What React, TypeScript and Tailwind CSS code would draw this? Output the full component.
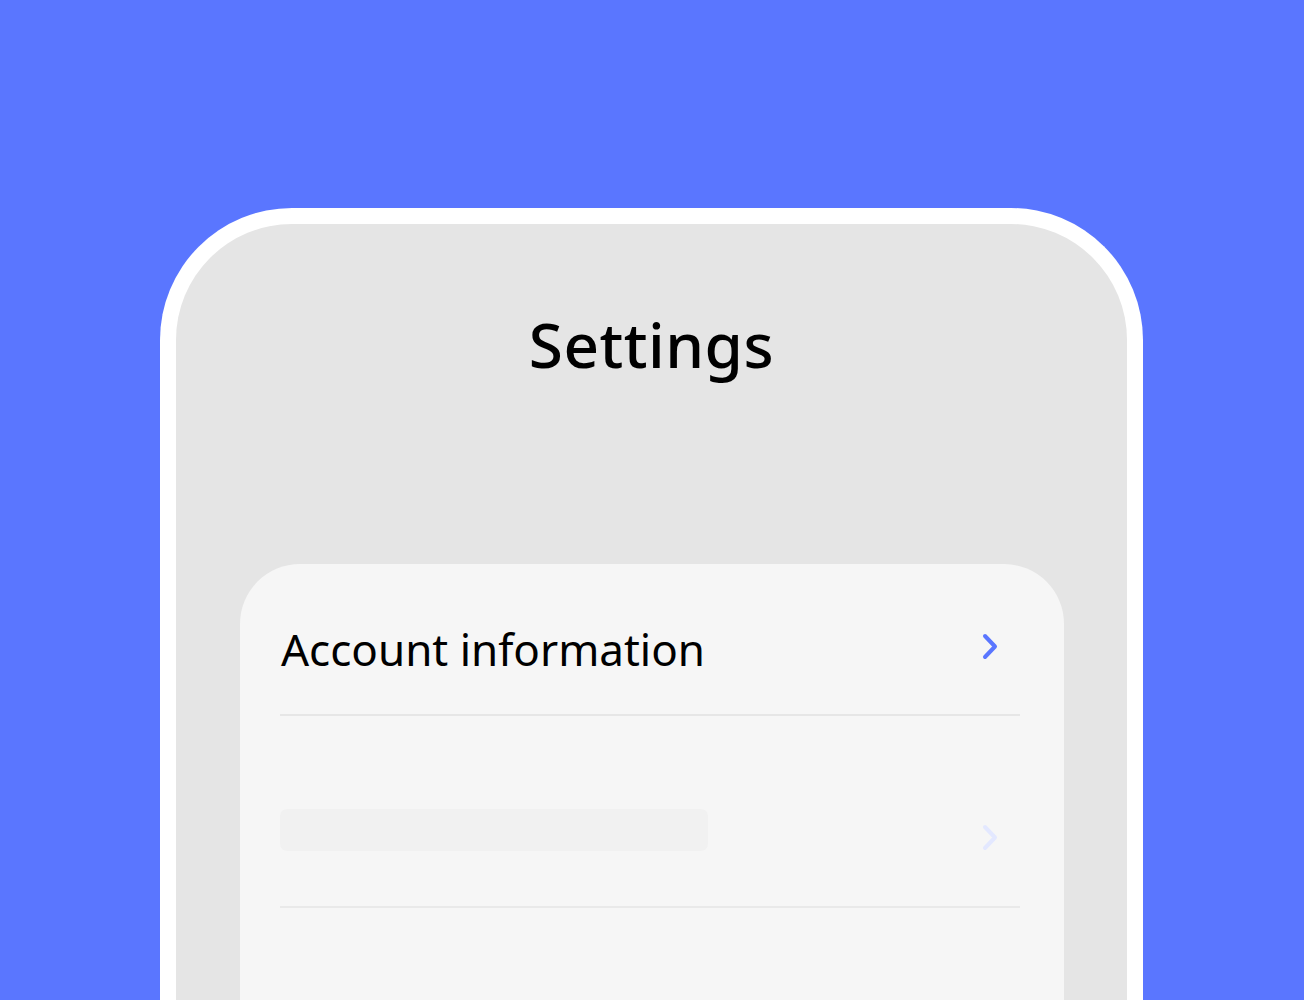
import React from "react";

function Chevron({ className }: { className: string }) {
  return (
    <svg width="22" height="30" viewBox="0 0 22 30" fill="none" className={className}>
      <path d="M6 4 L16 14.5 L6 25" stroke="currentColor" strokeWidth="4" strokeLinecap="round" strokeLinejoin="round" />
    </svg>
  );
}

export default function App() {
  return (
    <div
      className="w-[1304px] h-[1000px] overflow-hidden bg-[#5a76ff] pt-[208px] pl-[160px] pr-[161px]"
      style={{ fontFamily: '"Noto Sans", "Open Sans", sans-serif' }}
    >
      <div className="h-[900px] rounded-t-[132px] border-[16px] border-b-0 border-white bg-[#e5e5e5]">
        <h1 className="pt-[82px] text-center text-[62px] leading-[76px] font-medium text-black tracking-[0.5px]">
          Settings
        </h1>
        <div className="mt-[182px] ml-[64px] mr-[63px] rounded-t-[60px] bg-[#f6f6f6] pl-[40px] pr-[44px] h-[600px]">
          <div className="flex items-center justify-between h-[152px] border-b-2 border-[#e6e6e6] pt-[20px]">
            <span className="text-[44px] leading-[56px] text-black pl-[1px]">Account information</span>
            <Chevron className="text-[#5a76ff] mr-[19px] -mt-[4px]" />
          </div>
          <div className="flex items-center justify-between h-[192px] border-b-2 border-[#e9e9e9] pb-[36px] pt-[74px]">
            <div className="w-[428px] h-[42px] rounded-[7px] bg-[#f1f1f1]" />
            <Chevron className="text-[#e3e8ff] mr-[19px] mt-[16px]" />
          </div>
        </div>
      </div>
    </div>
  );
}
